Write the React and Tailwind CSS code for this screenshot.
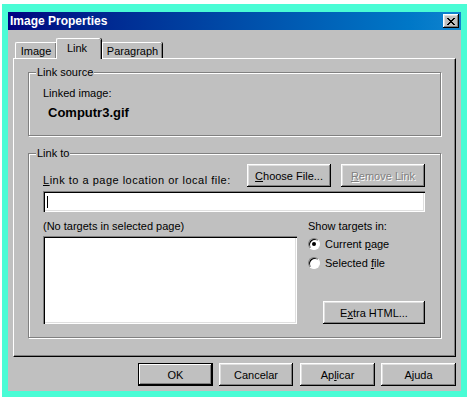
import React from 'react';

const raised =
    'bg-[#c0c0c0] shadow-[inset_-1px_-1px_0_#000,inset_1px_1px_0_#fff,inset_-2px_-2px_0_#808080,inset_2px_2px_0_#dfdfdf]';
const sunken =
    'bg-white shadow-[inset_1px_1px_0_#808080,inset_2px_2px_0_#000,inset_-1px_-1px_0_#fff,inset_-2px_-2px_0_#dfdfdf]';

function Button({ children, className = '', disabled = false }) {
    return (
        <div
            className={`${raised} flex items-center justify-center leading-[14px] ${
                disabled ? 'text-[#808080] [text-shadow:1px_1px_0_#fff]' : 'text-black'
            } ${className}`}
        >
            {children}
        </div>
    );
}

function Group({ label, className = '', children }) {
    return (
        <div
            className={`relative ml-[14px] w-[413px] border border-[#808080] shadow-[inset_1px_1px_0_#fff,1px_1px_0_#fff] ${className}`}
        >
            <span className="absolute -top-[8px] left-[7px] bg-[#c0c0c0] px-[1px] leading-[14px]">{label}</span>
            {children}
        </div>
    );
}

function Radio({ checked, children }) {
    return (
        <div className="flex h-[14px] items-center gap-[5px]">
            <div className="flex size-[12px] items-center justify-center rounded-full border border-t-[#808080] border-l-[#808080] border-r-white border-b-white bg-white shadow-[inset_1px_1px_0_#000]">
                {checked && <div className="size-[4px] rounded-full bg-black" />}
            </div>
            <span className="leading-[14px]">{children}</span>
        </div>
    );
}

export default function App() {
    return (
        <div
            className="h-[402px] w-[472px] bg-white pt-[4px] pl-[2px] text-[11px] text-black"
            style={{ fontFamily: '"Liberation Sans", Arial, sans-serif' }}
        >
            <div className="w-[465px] border-x-[6px] border-t-[8px] border-b-[6px] border-[#4afcd5]">
                <div className="flex h-[379px] flex-col bg-[#c0c0c0]">
                    {/* title bar */}
                    <div className="flex h-[18px] items-center justify-between bg-gradient-to-r from-[#000080] to-[#1084d0] pl-[2px] pr-[2px]">
                        <span className="text-[12px] font-bold leading-none text-white">Image Properties</span>
                        <div className={`${raised} flex h-[14px] w-[16px] items-center justify-center`}>
                            <svg width="8" height="7" viewBox="0 0 8 7" shapeRendering="crispEdges">
                                <path d="M0 0h2v1h1v1h2V1h1V0h2v1H7v1H6v1H5v1h1v1h1v1h1v1H6V6H5V5H3v1H2v1H0V6h1V5h1V4h1V3H2V2H1V1H0z" fill="#000" />
                            </svg>
                        </div>
                    </div>

                    {/* tabs */}
                    <div className="mt-[8px] flex h-[20px] items-end pl-[7px]">
                        <div className="flex h-[16px] w-[41px] items-center justify-center rounded-tl-[2px] border-t border-l border-white shadow-[inset_-1px_0_0_#808080,1px_0_0_#000]">
                            <span className="leading-[14px]">Image</span>
                        </div>
                        <div className="relative z-10 -mb-[1px] flex h-[21px] w-[45px] items-start justify-center rounded-tl-[2px] rounded-tr-[2px] border-t border-l border-white bg-[#c0c0c0] pt-[2px] shadow-[inset_-1px_0_0_#808080,1px_0_0_#000]">
                            <span className="-ml-[4px] leading-[14px]">Link</span>
                        </div>
                        <div className="ml-[1px] flex h-[16px] w-[60px] items-center justify-center rounded-tr-[2px] border-t border-l border-white shadow-[inset_-1px_0_0_#808080,1px_0_0_#000]">
                            <span className="leading-[14px]">Paragraph</span>
                        </div>
                    </div>

                    {/* tab panel */}
                    <div className="ml-[5px] h-[299px] w-[443px] border-t border-l border-r border-b border-t-white border-l-white border-r-black border-b-black shadow-[inset_-1px_-1px_0_#808080]">
                        <Group label="Link source" className="mt-[13px] h-[64px] pt-[13px] pl-[14px]">
                            <div className="leading-[14px]">Linked image:</div>
                            <div className="mt-[5px] pl-[5px] text-[13px] font-bold leading-[16px]">Computr3.gif</div>
                        </Group>

                        <Group label="Link to" className="mt-[17px] h-[185px] pt-[10px] pl-[14px]">
                            <div className="flex w-[382px] items-end justify-between">
                                <span className="leading-[14px] tracking-[0.5px]">
                                    <u>L</u>ink to a page location or local file:
                                </span>
                                <div className="flex gap-[10px]">
                                    <Button className="h-[23px] w-[84px]">
                                        <span>
                                            <u>C</u>hoose File...
                                        </span>
                                    </Button>
                                    <Button className="h-[23px] w-[84px]" disabled>
                                        <span>
                                            <u>R</u>emove Link
                                        </span>
                                    </Button>
                                </div>
                            </div>
                            <div className={`${sunken} mt-[4px] flex h-[21px] w-[382px] items-center pl-[4px]`}>
                                <div className="h-[12px] w-[1px] bg-black" />
                            </div>
                            <div className="mt-[7px] flex">
                                <div className="flex flex-col">
                                    <span className="leading-[14px]">(No targets in selected page)</span>
                                    <div className={`${sunken} mt-[3px] h-[88px] w-[254px]`} />
                                </div>
                                <div className="ml-[11px] flex w-[117px] flex-col">
                                    <span className="leading-[14px]">Show targets in:</span>
                                    <div className="mt-[4px] flex flex-col gap-[5px]">
                                        <Radio checked>
                                            Current <u>p</u>age
                                        </Radio>
                                        <Radio>
                                            Selected <u>f</u>ile
                                        </Radio>
                                    </div>
                                    <Button className="mt-auto h-[23px] w-[102px] self-end">
                                        <span>
                                            E<u>x</u>tra HTML...
                                        </span>
                                    </Button>
                                </div>
                            </div>
                        </Group>
                    </div>

                    {/* dialog buttons */}
                    <div className="mt-[6px] flex justify-end gap-[6px] pr-[5px]">
                        <div className="h-[23px] w-[75px] border border-black">
                            <div className="flex h-full w-full items-center justify-center bg-[#c0c0c0] leading-[14px] shadow-[inset_-1px_-1px_0_#000,inset_1px_1px_0_#fff,inset_-2px_-2px_0_#808080]">
                                OK
                            </div>
                        </div>
                        <Button className="h-[23px] w-[74px]">Cancelar</Button>
                        <Button className="ml-[1px] h-[23px] w-[75px]">
                            <span>
                                Ap<u>l</u>icar
                            </span>
                        </Button>
                        <Button className="h-[23px] w-[75px]">Ajuda</Button>
                    </div>
                </div>
            </div>
        </div>
    );
}
